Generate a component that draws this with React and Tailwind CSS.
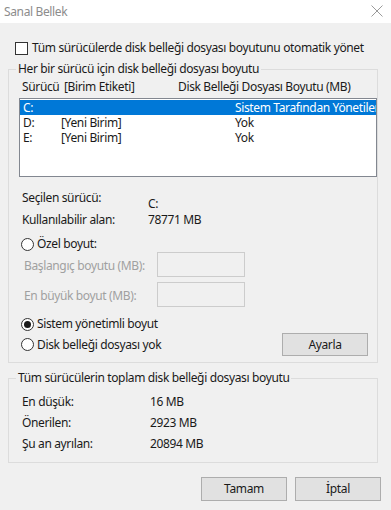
import React from 'react';

const font = { fontFamily: '"Noto Sans", "Open Sans", sans-serif' };

const Radio = ({ checked }) => (
  <span className="w-[13px] h-[13px] rounded-full border border-[#333333] bg-white flex items-center justify-center shrink-0">
    {checked && <span className="w-[7px] h-[7px] rounded-full bg-[#1a1a1a]" />}
  </span>
);

const drives = [
  { letter: 'C:', label: '', size: 'Sistem Tarafından Yönetilen', selected: true },
  { letter: 'D:', label: '[Yeni Birim]', size: 'Yok' },
  { letter: 'E:', label: '[Yeni Birim]', size: 'Yok' },
];

const App = () => {
  return (
    <div className="w-[391px] h-[510px] bg-[#f0f0f0] text-[12px] tracking-[-0.36px] text-[#1a1a1a] overflow-hidden" style={font}>
      {/* başlık çubuğu */}
      <div className="h-[23px] bg-white flex items-center justify-between pl-[4px] pr-[8px]">
        <span className="text-[12px] text-[#8c8c8c] leading-[16px]">Sanal Bellek</span>
        <svg width="12" height="12" viewBox="0 0 12 12" className="mt-[-1px]">
          <path d="M0.5 0.5 L11.5 11.5 M11.5 0.5 L0.5 11.5" stroke="#9a9a9a" strokeWidth="1" fill="none" />
        </svg>
      </div>

      {/* otomatik yönet */}
      <div className="mt-[17px] ml-[15px] flex items-center h-[16px] leading-[16px]">
        <span className="w-[13px] h-[13px] border border-[#333333] bg-white shrink-0" />
        <span className="ml-[4px] whitespace-nowrap">Tüm sürücülerde disk belleği dosyası boyutunu otomatik yönet</span>
      </div>

      {/* grup 1 */}
      <div className="mt-[13px] ml-[8px] w-[370px] border border-[#dcdcdc] pb-[6px]">
        <div className="mt-[-9px] ml-[7px] px-[2px] bg-[#f0f0f0] w-fit leading-[16px]">
          Her bir sürücü için disk belleği dosyası boyutu
        </div>
        <div className="mt-[2px] flex leading-[16px] pl-[13px] whitespace-nowrap">
          <span className="w-[42px] shrink-0">Sürücü</span>
          <span className="w-[114px] shrink-0">[Birim Etiketi]</span>
          <span>Disk Belleği Dosyası Boyutu (MB)</span>
        </div>
        <div className="mt-[3px] ml-[10px] h-[79px] border border-[#828790] bg-white pt-[1px] overflow-hidden">
          {drives.map((d) => (
            <div
              key={d.letter}
              className={`h-[15px] leading-[15px] flex whitespace-nowrap overflow-hidden ${d.selected ? 'bg-[#0078d7] text-white' : ''}`}
            >
              <span className="w-[41px] pl-[3px] shrink-0">{d.letter}</span>
              <span className="w-[174px] shrink-0">{d.label}</span>
              <span className="shrink-0">{d.size}</span>
            </div>
          ))}
        </div>

        <div className="mt-[13px] pl-[13px] flex leading-[16px]">
          <span className="w-[126px] shrink-0">Seçilen sürücü:</span>
          <span className="mt-[6px]">C:</span>
        </div>
        <div className="pl-[13px] flex leading-[16px]">
          <span className="w-[126px] shrink-0">Kullanılabilir alan:</span>
          <span>78771 MB</span>
        </div>

        <div className="mt-[8px] pl-[12px] flex items-center h-[16px]">
          <Radio />
          <span className="ml-[3px]">Özel boyut:</span>
        </div>
        <div className="pl-[15px] flex items-center h-[25px]">
          <span className="w-[133px] shrink-0 text-[#a0a0a0] pt-[2px]">Başlangıç boyutu (MB):</span>
          <span className="w-[88px] h-[25px] border border-[#cccccc] bg-[#f0f0f0]" />
        </div>
        <div className="mt-[5px] pl-[15px] flex items-center h-[25px]">
          <span className="w-[133px] shrink-0 text-[#a0a0a0] pt-[2px]">En büyük boyut (MB):</span>
          <span className="w-[88px] h-[25px] border border-[#cccccc] bg-[#f0f0f0]" />
        </div>

        <div className="mt-[9px] pl-[12px] flex items-center h-[16px]">
          <Radio checked />
          <span className="ml-[3px]">Sistem yönetimli boyut</span>
        </div>
        <div className="mt-[1px] pl-[12px] pr-[9px] flex items-center justify-between h-[23px]">
          <div className="flex items-center">
            <Radio />
            <span className="ml-[3px]">Disk belleği dosyası yok</span>
          </div>
          <button className="w-[86px] h-[23px] border border-[#adadad] bg-[#e1e1e1] text-[12px] leading-[16px]">
            Ayarla
          </button>
        </div>
      </div>

      {/* grup 2 */}
      <div className="mt-[15px] ml-[8px] w-[370px] border border-[#dcdcdc] pb-[8px]">
        <div className="mt-[-9px] ml-[7px] px-[2px] bg-[#f0f0f0] w-fit leading-[16px]">
          Tüm sürücülerin toplam disk belleği dosyası boyutu
        </div>
        <div className="mt-[5px] pl-[13px]">
          {[
            ['En düşük:', '16 MB'],
            ['Önerilen:', '2923 MB'],
            ['Şu an ayrılan:', '20894 MB'],
          ].map(([k, v]) => (
            <div key={k} className="flex h-[21px] leading-[21px]">
              <span className="w-[128px] shrink-0">{k}</span>
              <span>{v}</span>
            </div>
          ))}
        </div>
      </div>

      {/* alt düğmeler */}
      <div className="mt-[14px] flex justify-end gap-[8px] pr-[10px]">
        <button className="w-[86px] h-[24px] border border-[#adadad] bg-[#e1e1e1] text-[12px] leading-[16px]">Tamam</button>
        <button className="w-[86px] h-[24px] border border-[#adadad] bg-[#e1e1e1] text-[12px] leading-[16px]">İptal</button>
      </div>
    </div>
  );
};

export default App;
